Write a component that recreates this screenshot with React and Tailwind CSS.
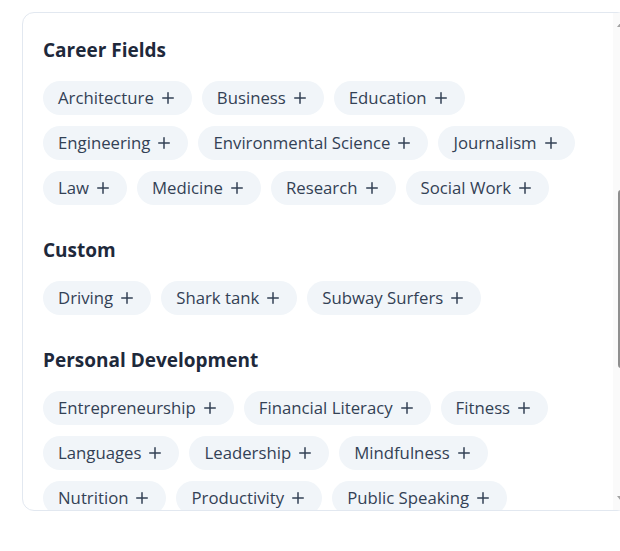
import React, { useLayoutEffect, useRef } from "react";

const sections = [
  {
    title: "Academic Subjects",
    items: ["Biology", "Chemistry", "Computer Science", "Economics", "History", "Literature", "Mathematics", "Physics", "Psychology"],
  },
  {
    title: "Arts & Creativity",
    items: ["Design", "Film", "Music", "Photography", "Theatre", "Writing"],
  },
  {
    title: "Current Events",
    items: ["Politics", "Technology News", "World Affairs"],
  },
  {
    title: "Career Fields",
    anchor: true,
    items: ["Architecture", "Business", "Education", "Engineering", "Environmental Science", "Journalism", "Law", "Medicine", "Research", "Social Work"],
  },
  {
    title: "Custom",
    items: ["Driving", "Shark tank", "Subway Surfers"],
  },
  {
    title: "Personal Development",
    items: ["Entrepreneurship", "Financial Literacy", "Fitness", "Languages", "Leadership", "Mindfulness", "Nutrition", "Productivity", "Public Speaking", "Time Management"],
  },
  {
    title: "Science & Technology",
    items: ["Artificial Intelligence", "Astronomy", "Biotechnology", "Climate Change", "Cybersecurity", "Robotics", "Space Exploration"],
  },
];

function Plus() {
  return (
    <svg width="12" height="12" viewBox="0 0 12 12" fill="none" stroke="currentColor" strokeWidth="1.5" strokeLinecap="round">
      <path d="M6 0.75V11.25" />
      <path d="M0.75 6H11.25" />
    </svg>
  );
}

function Chip({ label }) {
  return (
    <button className="flex h-[34px] items-center gap-2 rounded-full bg-[#f1f5f9] pl-[15px] pr-[18px] text-[16.75px] leading-none text-[#334155]">
      <span>{label}</span>
      <Plus />
    </button>
  );
}

function ScrollbarSliver() {
  return (
    <div className="absolute left-[613px] top-[13px] h-[497px] w-[15px] bg-[#fafafa]">
      <svg className="absolute left-[0px] top-[8px]" width="15" height="8" viewBox="0 0 15 8">
        <path d="M7.5 1.5L11 6H4Z" fill="#a3a3a3" />
      </svg>
      <div className="absolute left-[5px] top-[177px] h-[178px] w-[6px] rounded-full bg-[#8f8f8f]" />
      <svg className="absolute bottom-[8px] left-[0px]" width="15" height="8" viewBox="0 0 15 8">
        <path d="M7.5 6.5L11 2H4Z" fill="#a3a3a3" />
      </svg>
    </div>
  );
}

export default function App() {
  const scrollRef = useRef(null);
  const anchorRef = useRef(null);

  useLayoutEffect(() => {
    if (scrollRef.current && anchorRef.current) {
      scrollRef.current.scrollTop = anchorRef.current.offsetTop - 23;
    }
  }, []);

  return (
    <div className="relative h-[551px] w-[620px] overflow-hidden bg-white pl-[22px] pt-3 font-['Open_Sans',ui-sans-serif,sans-serif]">
      <div
        ref={scrollRef}
        className="relative h-[499px] w-[607px] overflow-hidden rounded-xl border border-[#e2e8f0] bg-white"
      >
        <div className="flex flex-col gap-[31px] py-5 pl-5 pr-[35px]">
          {sections.map((s) => (
            <section key={s.title} ref={s.anchor ? anchorRef : undefined}>
              <h2 className="mb-[17px] text-[19px] font-bold leading-7 text-[#1e293b]">{s.title}</h2>
              <div className="flex flex-wrap gap-x-2.5 gap-y-[11px]">
                {s.items.map((it) => (
                  <Chip key={it} label={it} />
                ))}
              </div>
            </section>
          ))}
        </div>
      </div>
      <ScrollbarSliver />
    </div>
  );
}
